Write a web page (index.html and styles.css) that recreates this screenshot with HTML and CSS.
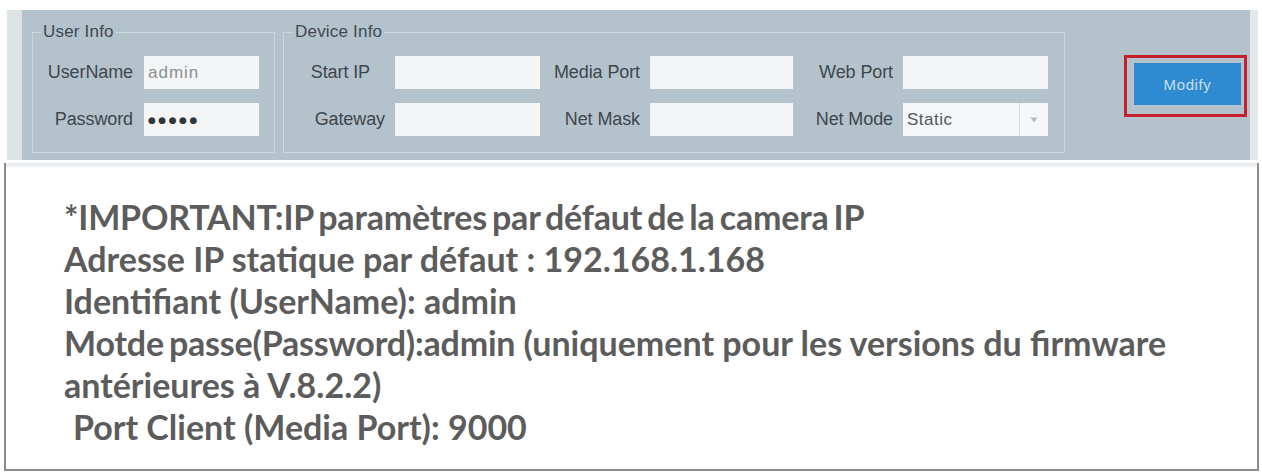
FILE: index.html
```html
<!DOCTYPE html>
<html lang="fr">
<head>
<meta charset="utf-8">
<title>Paramètres IP</title>
<link rel="stylesheet" href="styles.css">
</head>
<body>
<div class="page">
  <div class="panel">
    <fieldset class="group user">
      <legend>User Info</legend>
      <div class="grid ugrid">
        <label class="lbl">UserName</label>
        <div class="inp"><span class="val">admin</span></div>
        <label class="lbl">Password</label>
        <div class="inp"><span class="dots">&#9679;&#9679;&#9679;&#9679;&#9679;</span></div>
      </div>
    </fieldset>
    <fieldset class="group device">
      <legend>Device Info</legend>
      <div class="grid dgrid">
        <label class="lbl lbl-start">Start IP</label>
        <div class="inp"></div>
        <label class="lbl">Media Port</label>
        <div class="inp"></div>
        <label class="lbl">Web Port</label>
        <div class="inp"></div>
        <label class="lbl">Gateway</label>
        <div class="inp"></div>
        <label class="lbl">Net Mask</label>
        <div class="inp"></div>
        <label class="lbl">Net Mode</label>
        <div class="inp select"><span class="sel-val">Static</span><span class="arrow"><svg width="8" height="6" viewBox="0 0 8 6"><path d="M0.5 0.5 L7.5 0.5 L4 5.5 Z" fill="#b3b9be"/></svg></span></div>
      </div>
    </fieldset>
    <div class="highlight">
      <button class="modify" type="button">Modify</button>
    </div>
  </div>
  <div class="note">
    <div class="line tight">*IMPORTANT:IP paramètres par défaut de la camera IP</div>
    <div class="line">Adresse IP statique par défaut : 192.168.1.168</div>
    <div class="line">Identifiant (UserName): admin</div>
    <div class="line"><span class="tight">Motde passe(Password):admin</span> (uniquement pour les versions du firmware</div>
    <div class="line">antérieures à V.8.2.2)</div>
    <div class="line indent">Port Client (Media Port): 9000</div>
  </div>
</div>
</body>
</html>
```
FILE: styles.css
```css
html, body {
  margin: 0;
  padding: 0;
  background: #ffffff;
}
.page {
  width: 1262px;
  height: 473px;
  padding-top: 10px;
  box-sizing: border-box;
  font-family: "Liberation Sans", Arial, sans-serif;
}
.panel {
  margin-left: 7px;
  width: 1251px;
  height: 150px;
  box-sizing: border-box;
  background: #b4c2cc;
  border-left: 15px solid #dde2e5;
  border-right: 8px solid #e4e8ea;
  display: flex;
  align-items: flex-start;
  padding: 13px 0 0 10px;
}
.group {
  margin: 0;
  border: 1px solid #cbd5dc;
  box-sizing: border-box;
  height: 130px;
}
.group legend {
  font-size: 17px;
  color: #414950;
  padding: 0 2px;
  line-height: 18px;
  letter-spacing: 0.2px;
}
.user {
  width: 243px;
  padding: 15px 14px 0 11px;
}
.user legend { margin-left: -3px; }
.device {
  margin-left: 8px;
  width: 782px;
  padding: 15px 16px 0 16px;
}
.device legend { margin-left: -7px; }
.grid {
  display: grid;
  row-gap: 14px;
  align-items: center;
}
.ugrid {
  grid-template-columns: 89px 115px;
  column-gap: 11px;
}
.dgrid {
  grid-template-columns: 85px 145px 90px 143px 90px 145px;
  column-gap: 10px;
}
.lbl {
  text-align: right;
  font-size: 18px;
  color: #3f464d;
  letter-spacing: -0.1px;
  white-space: nowrap;
}
.lbl-start { padding-right: 15px; }
.inp {
  height: 33px;
  background: #f3f5f6;
  display: flex;
  align-items: center;
  padding-left: 4px;
  box-sizing: border-box;
}
.val {
  font-size: 17px;
  letter-spacing: 1px;
  color: #8a9095;
}
.dots {
  font-family: "DejaVu Sans", sans-serif;
  font-size: 9px;
  letter-spacing: 2.5px;
  color: #30363b;
}
.select {
  background: #f5f6f7;
}
.sel-val {
  flex: 1;
  font-size: 17px;
  letter-spacing: 0.5px;
  color: #50575d;
}
.arrow {
  width: 29px;
  height: 100%;
  border-left: 1px solid #d6dbdf;
  display: flex;
  align-items: center;
  justify-content: center;
  box-sizing: border-box;
}
.highlight {
  margin-left: 59px;
  margin-top: 32px;
  border: 3px solid #c6202c;
  width: 123px;
  height: 62px;
  box-sizing: border-box;
  padding: 5px 3px 0 7px;
}
.modify {
  display: block;
  width: 107px;
  height: 42px;
  border: none;
  background: #2f8bd1;
  color: #c9def0;
  font-family: "Liberation Sans", Arial, sans-serif;
  font-size: 15px;
  letter-spacing: 0.6px;
  padding: 0;
}
.note {
  margin: 3px 0 0 4px;
  width: 1255px;
  height: 308px;
  box-sizing: border-box;
  border: 2px solid #8c8c8c;
  border-top: none;
  background: linear-gradient(#dfe6ec 0, #ffffff 6px);
  padding: 33px 0 0 58px;
  font-family: Lato, "Open Sans", sans-serif;
  font-weight: 700;
  font-size: 34px;
  color: #5c5c5c;
}
.line {
  height: 42px;
  line-height: 42px;
  white-space: nowrap;
}
.tight { word-spacing: -3px; letter-spacing: -0.2px; }
.indent { padding-left: 9px; }
```
